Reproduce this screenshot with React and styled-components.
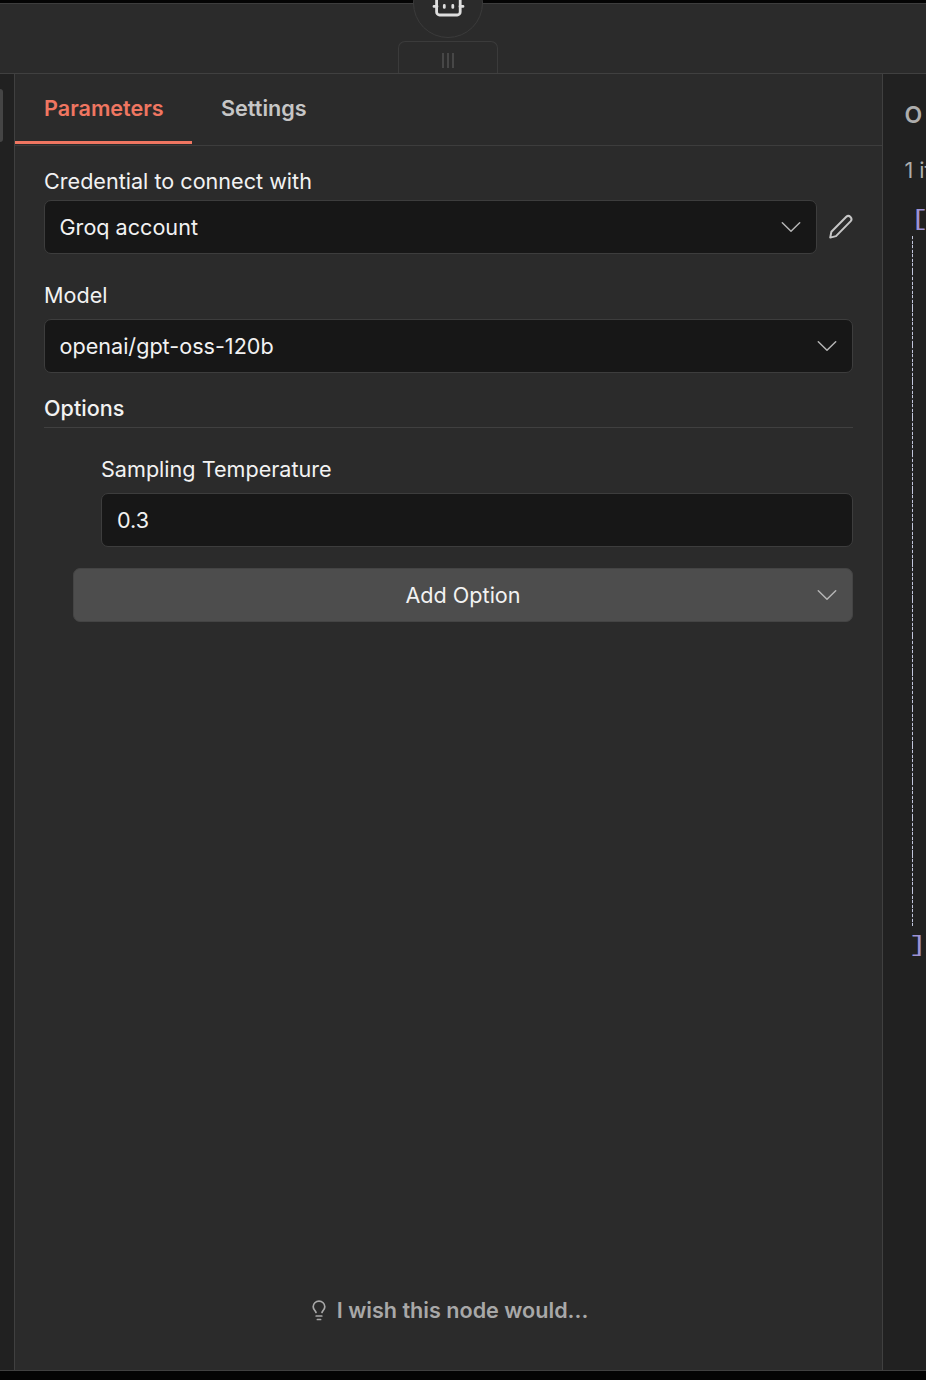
import React from 'react';
import styled, { createGlobalStyle } from 'styled-components';

const Global = createGlobalStyle`
  * { box-sizing: border-box; }
  body { margin: 0; background: #000; overflow: hidden; }
`;

const Page = styled.div`
  width: 926px;
  height: 1380px;
  display: flex;
  flex-direction: column;
  overflow: hidden;
  background: #040404;
  padding: 3px 0 9px;
  font-family: Inter, sans-serif;
  font-size: 21.6px;
  line-height: 28px;
  color: #f2f2f2;
`;

const DragArea = styled.header`
  position: relative;
  flex: none;
  height: 71px;
  display: flex;
  justify-content: center;
  align-items: flex-end;
  background: #2b2b2b;
  border-top: 1px solid #3d3d3d;
  border-bottom: 1px solid #404040;
  padding-right: 30px;
`;

const NodeBadge = styled.div`
  position: absolute;
  left: 413px;
  top: -36px;
  width: 70px;
  height: 70px;
  border: 1px solid #3b3b3b;
  border-radius: 50%;
  background: #2b2b2b;
  display: grid;
  place-items: center;
`;

const Handle = styled.div`
  width: 100px;
  height: 32px;
  display: flex;
  justify-content: center;
  gap: 3px;
  padding-top: 11px;
  border: 1px solid #3b3b3b;
  border-bottom: 0;
  border-radius: 7px 7px 0 0;
`;

const Grip = styled.i`
  width: 2px;
  height: 15px;
  background: #474747;
`;

const Body = styled.div`
  flex: 1;
  min-height: 0;
  display: flex;
  border-bottom: 1px solid #404040;
`;

const InputPane = styled.aside`
  flex: none;
  width: 14px;
  padding-top: 15px;
  background: #212121;
`;

const PaneButton = styled.div`
  width: 3px;
  height: 53px;
  background: #454545;
  border-radius: 0 4px 4px 0;
`;

const Main = styled.main`
  flex: none;
  width: 869px;
  display: flex;
  flex-direction: column;
  background: #2b2b2b;
  border: solid #404040;
  border-width: 0 1px;
`;

const Tabs = styled.nav`
  flex: none;
  display: flex;
  height: 72px;
  padding-bottom: 1px;
  border-bottom: 1px solid #3d3d3d;
`;

const Tab = styled.div`
  padding: 20px 29px 0;
  font-weight: 600;
  width: ${(p) => p.$width}px;
  white-space: nowrap;
  color: ${(p) => (p.$active ? '#f07661' : '#c6c6c6')};
  border-bottom: 3px solid ${(p) => (p.$active ? '#f07661' : 'transparent')};
`;

const Form = styled.section`
  flex: 1;
  display: flex;
  flex-direction: column;
  padding: 21px 29px 0;
`;

const Label = styled.div`
  height: 28px;
  margin-bottom: ${(p) => p.$gap}px;
`;

const FieldRow = styled.div`
  display: flex;
  align-items: center;
  gap: 12px;
  margin-bottom: ${(p) => p.$after}px;
`;

const Field = styled.div`
  flex: 1;
  height: 54px;
  display: flex;
  align-items: center;
  justify-content: space-between;
  padding: 0 14.5px;
  background: #171717;
  border: 1px solid #3d3d3d;
  border-radius: 7px;
`;

const OptionsTitle = styled.h2`
  margin: 0 0 27px;
  height: 34px;
  font-size: inherit;
  line-height: 28px;
  font-weight: 500;
  border-bottom: 1px solid #404040;
`;

const Option = styled.div`
  display: flex;
  flex-direction: column;
  padding-left: 57px;
`;

const OptionField = styled(Field)`
  flex: none;
  padding-left: 15px;
`;

const AddOption = styled.div`
  height: 54px;
  margin: 21px 0 0 29px;
  padding: 0 14.5px 0 36.5px;
  display: flex;
  align-items: center;
  background: #4d4d4d;
  border: 1px solid #444;
  border-radius: 7px;
`;

const AddLabel = styled.span`
  flex: 1;
  text-align: center;
`;

const Wish = styled.footer`
  flex: none;
  display: flex;
  justify-content: center;
  align-items: center;
  gap: 11px;
  height: 28px;
  margin-bottom: 46px;
  padding-left: 3px;
  font-weight: 600;
  color: #a8a8a8;
`;

const OutputPane = styled.aside`
  flex: 1;
  min-width: 0;
  overflow: hidden;
  white-space: nowrap;
  background: #212121;
  color: #adadad;
  padding: 27px 0 0 21px;
`;

const OutputTitle = styled.div`
  font-weight: 600;
  font-size: 23px;
  padding-left: 0.5px;
  margin-bottom: 27px;
`;

const ItemCount = styled.div`
  padding-left: 0.5px;
  overflow: hidden;
`;

const Json = styled.div`
  margin-top: 21px;
  color: #9d93d3;
  font-family: 'Liberation Mono', monospace;
  font-size: 22.5px;
`;

const Bracket = styled.div`
  width: 14px;
  height: 28px;
  margin-left: ${(p) => p.$indent}px;
  transform: translateY(${(p) => p.$shift}px) scaleX(1.35);
`;

const IndentGuide = styled.div`
  width: 1px;
  height: 690px;
  margin: 3px 0 4px 8px;
  background:
    repeating-linear-gradient(transparent 0 33px, #c2c6dc 33px 36.4px),
    repeating-linear-gradient(#c2c6dc 0 3px, #3a3b40 3px 4.55px);
`;

const Chevron = () => (
  <svg width="22" height="14" viewBox="0 0 22 14" fill="none" stroke="#b5b5b5" strokeWidth="1.5" strokeLinecap="round" strokeLinejoin="round">
    <path d="M2.300 2.800 11 11.200 19.700 2.800" />
  </svg>
);

const Pencil = () => (
  <svg width="24" height="26" viewBox="0 0 24 26" fill="none" stroke="#c6c6c6" strokeWidth="2" strokeLinejoin="round">
    <path d="M1.200 23.600 2.400 17.800 17.300 2.800C20 .3 24.300 4.300 21.500 7.400L7 22.100Z" />
  </svg>
);

const Bot = () => (
  <svg width="34" height="34" viewBox="0 0 34 34" fill="none" stroke="#dedede" strokeWidth="2.800" strokeLinecap="round" strokeLinejoin="round">
    <path d="M17 8V3h-6M3 20.400H6M29 20.400h3" />
    <rect x="5.600" y="8" width="23.600" height="21" rx="3" />
    <path d="M13.300 19.400v2M21.800 19.400v2" />
  </svg>
);

const Bulb = () => (
  <svg width="14" height="21" viewBox="0 0 14 21" fill="none" stroke="#a8a8a8" strokeWidth="1.700" strokeLinecap="round" strokeLinejoin="round">
    <path d="M4 12.500C3.600 10.700 1.200 9.700 1.200 6.700a5.800 5.600 0 0 1 11.600 0C12.800 9.700 10.400 10.700 10 12.500M4.200 16h5.600M5.400 19.500h3.200" />
  </svg>
);

export default function App() {
  return (
    <Page>
      <Global />
      <DragArea>
        <NodeBadge><Bot /></NodeBadge>
        <Handle><Grip /><Grip /><Grip /></Handle>
      </DragArea>
      <Body>
        <InputPane><PaneButton /></InputPane>
        <Main>
          <Tabs>
            <Tab $active $width={177}>Parameters</Tab>
            <Tab $width={144}>Settings</Tab>
          </Tabs>
          <Form>
            <Label $gap={5}>Credential to connect with</Label>
            <FieldRow $after={27}>
              <Field>Groq account<Chevron /></Field>
              <Pencil />
            </FieldRow>
            <Label $gap={10}>Model</Label>
            <FieldRow $after={21}>
              <Field>openai/gpt-oss-120b<Chevron /></Field>
            </FieldRow>
            <OptionsTitle>Options</OptionsTitle>
            <Option>
              <Label $gap={10}>Sampling Temperature</Label>
              <OptionField>0.3</OptionField>
            </Option>
            <AddOption><AddLabel>Add Option</AddLabel><Chevron /></AddOption>
          </Form>
          <Wish><Bulb />I wish this node would...</Wish>
        </Main>
        <OutputPane>
          <OutputTitle>O</OutputTitle>
          <ItemCount>1 item</ItemCount>
          <Json>
            <Bracket $indent={8.5} $shift={0}>[</Bracket>
            <IndentGuide />
            <Bracket $indent={7} $shift={1}>]</Bracket>
          </Json>
        </OutputPane>
      </Body>
    </Page>
  );
}
